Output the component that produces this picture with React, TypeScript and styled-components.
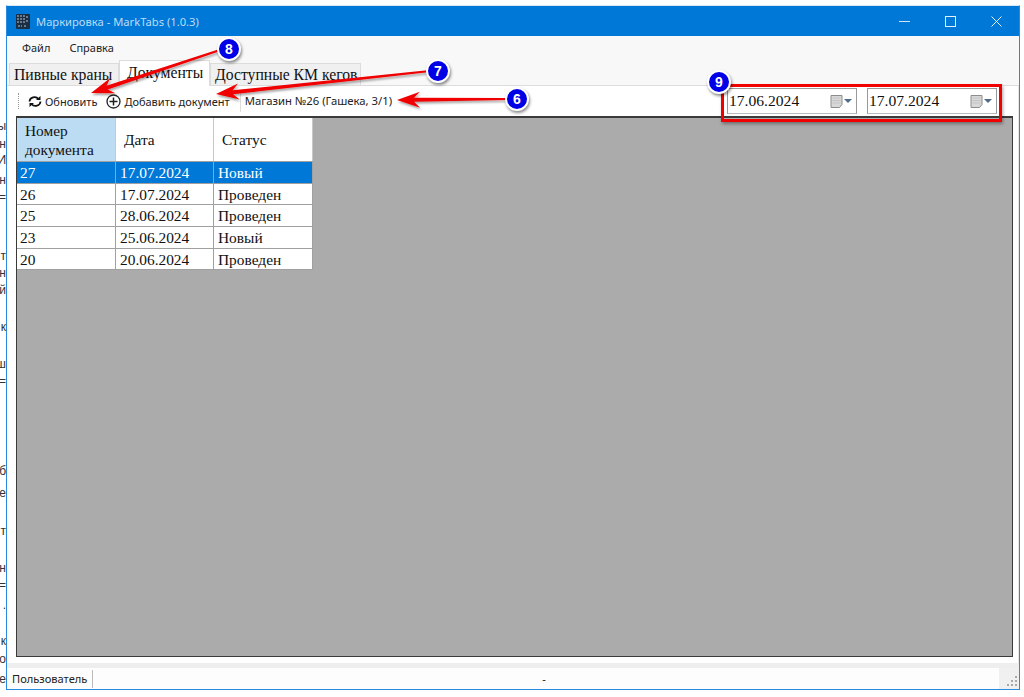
import React from "react";
import styled, { createGlobalStyle } from "styled-components";

const Global = createGlobalStyle`
  html, body { margin: 0; padding: 0; background: #fff; }
  #root { width: 1024px; height: 697px; overflow: hidden; }
`;

const Page = styled.div`
  position: relative;
  width: 1024px;
  height: 697px;
  padding: 5px 4px 7px 6px;
  box-sizing: border-box;
  background: #fff;
  display: flex;
  overflow: hidden;
`;

const Peek = styled.span<{ $top: number }>`
  position: absolute;
  right: 1018px;
  top: ${(p) => p.$top}px;
  font: 12px/14px "Liberation Sans", sans-serif;
  color: #333;
  white-space: nowrap;
`;

const Win = styled.div`
  position: relative;
  isolation: isolate;
  flex: 1;
  display: flex;
  flex-direction: column;
  border: 1px solid #2b8ae0;
  border-top-color: #d8e8f6;
  background: #fff;
  font-family: "Noto Sans", sans-serif;
`;

const TitleBar = styled.div`
  height: 30px;
  background: #0078d7;
  display: flex;
  align-items: center;
  padding-left: 8px;
  flex: none;
`;

const AppIcon = styled.svg`
  width: 16px;
  height: 17px;
  margin-right: 5px;
`;

const TitleText = styled.span`
  font: 11.2px "Noto Sans", sans-serif;
  color: #bcdcf6;
  flex: 1;
`;

const WinButton = styled.div`
  width: 46px;
  height: 30px;
  display: flex;
  align-items: center;
  justify-content: center;
`;

const MenuBar = styled.div`
  height: 23px;
  background: #f8f8f8;
  display: flex;
  align-items: center;
  padding-left: 15px;
  gap: 19px;
  flex: none;
`;

const MenuItem = styled.span`
  font: 11px "Noto Sans", sans-serif;
  color: #222;
`;

const TabStrip = styled.div`
  height: 26px;
  background: #f8f8f8;
  display: flex;
  align-items: flex-end;
  padding-left: 2px;
  flex: none;
`;

const Tab = styled.div<{ $active?: boolean; $w: number }>`
  height: ${(p) => (p.$active ? 26 : 22)}px;
  width: ${(p) => p.$w}px;
  box-sizing: border-box;
  background: ${(p) => (p.$active ? "#fff" : "#f0f0f0")};
  border: 1px solid #dcdcdc;
  border-bottom: none;
  margin-bottom: ${(p) => (p.$active ? -1 : 0)}px;
  z-index: ${(p) => (p.$active ? 1 : 0)};
  padding-left: ${(p) => (p.$active ? 7 : 4)}px;
  font: 15.7px/${(p) => (p.$active ? 24 : 21)}px "Liberation Serif", serif;
  color: #111;
  white-space: nowrap;
  overflow: hidden;
`;

const Panel = styled.div`
  flex: 1;
  min-height: 0;
  display: flex;
  flex-direction: column;
  background: #fff;
  border-top: 1px solid #dcdcdc;
  border-right: 1px solid #e6e6e6;
  padding: 0 5px 6px 9px;
`;

const Toolbar = styled.div`
  height: 30px;
  display: flex;
  align-items: center;
  flex: none;
  position: relative;
`;

const Grip = styled.div`
  width: 1px;
  height: 16px;
  margin: 0 8px 0 2px;
  border-left: 1px dotted #999;
`;

const ToolButton = styled.div`
  display: flex;
  align-items: center;
  gap: 3px;
  font: 11px "Noto Sans", sans-serif;
  color: #222;
  margin-right: 9px;
  white-space: nowrap;
`;

const ToolLabel = styled.div`
  border-left: 1px solid #ddd;
  height: 22px;
  margin-left: 1px;
  padding-left: 4px;
  font: 11.3px/22px "Noto Sans", sans-serif;
  color: #222;
  white-space: nowrap;
`;

const Spacer = styled.div`
  flex: 1;
`;

const DateBox = styled.div<{ $last?: boolean }>`
  width: 130px;
  height: 26px;
  box-sizing: border-box;
  border: 1px solid #999;
  border-bottom-color: #bbb;
  background: #fff;
  display: flex;
  align-items: center;
  padding: 0 3px 0 1px;
  margin-left: ${(p) => (p.$last ? 10 : 0)}px;
  margin-right: ${(p) => (p.$last ? 16 : 0)}px;
  font: 15.6px "Liberation Serif", serif;
  color: #111;
`;

const DateText = styled.span`
  flex: 1;
`;

const GridArea = styled.div`
  flex: 1;
  min-height: 0;
  background: #ababab;
  border: 1px solid #3a3a3a;
  border-top-width: 2px;
`;

const Table = styled.div`
  display: grid;
  grid-template-columns: 99px 98px 99px;
  grid-template-rows: 44px repeat(5, 21.7px);
  width: 296px;
  background: #a0a0a0;
`;

const HeadRow = styled.div`
  grid-column: 1 / 4;
  display: grid;
  grid-template-columns: 99px 98px 99px;
`;

const HeadCell = styled.div<{ $sel?: boolean }>`
  height: 43px;
  background: ${(p) => (p.$sel ? "#bcdcf4" : "#fff")};
  border-right: 1px solid #c8c8c8;
  box-sizing: border-box;
  display: flex;
  align-items: center;
  padding-left: 8px;
  font: 15.4px/19px "Liberation Serif", serif;
  color: #111;
`;

const Cell = styled.div<{ $sel?: boolean }>`
  box-sizing: border-box;
  height: calc(100% - 1px);
  margin-right: 1px;
  padding-left: 4px;
  background: ${(p) => (p.$sel ? "#0078d7" : "#fff")};
  color: ${(p) => (p.$sel ? "#fff" : "#111")};
  font: 15.4px/22px "Liberation Serif", serif;
  white-space: nowrap;
  overflow: hidden;
  &:nth-child(3n + 2) { padding-left: 3px; }
`;

const BandGap = styled.div`
  height: 5px;
  background: #eee;
  flex: none;
`;

const StatusBar = styled.div`
  height: 21px;
  background: #fdfdfd;
  display: flex;
  align-items: center;
  flex: none;
  position: relative;
  font: 11.1px "Noto Sans", sans-serif;
  color: #222;
`;

const StatusUser = styled.div`
  width: 86px;
  height: 18px;
  line-height: 18px;
  padding-left: 5px;
  box-sizing: border-box;
  border-right: 1px solid #bbb;
  white-space: nowrap;
`;

const StatusMid = styled.div`
  flex: 1;
  text-align: center;
  padding-right: 4px;
`;

const StatusGrip = styled.svg`
  width: 20px;
  height: 21px;
  background: #f0f0f0;
  flex: none;
`;

const Overlay = styled.svg`
  position: absolute;
  left: 0;
  top: 0;
  width: 1024px;
  height: 697px;
  pointer-events: none;
`;

const Badge = styled.div<{ $x: number; $y: number }>`
  position: absolute;
  left: ${(p) => p.$x - 12}px;
  top: ${(p) => p.$y - 12}px;
  width: 24px;
  height: 24px;
  box-sizing: border-box;
  border-radius: 50%;
  border: 2px solid #fff;
  background: #0000e6;
  box-shadow: 1px 2px 3px rgba(0, 0, 0, 0.45);
  color: #fff;
  font: bold 14px/20px "Liberation Sans", sans-serif;
  text-align: center;
`;

const RedFrame = styled.div`
  position: absolute;
  left: 721px;
  top: 84px;
  width: 281px;
  height: 38px;
  box-sizing: border-box;
  border: 3px solid #f00000;
  box-shadow: 1px 2px 3px rgba(0, 0, 0, 0.35);
`;

const rows = [
  ["27", "17.07.2024", "Новый"],
  ["26", "17.07.2024", "Проведен"],
  ["25", "28.06.2024", "Проведен"],
  ["23", "25.06.2024", "Новый"],
  ["20", "20.06.2024", "Проведен"],
];

const peeks: [number, string][] = [
  [119, "ы"], [137, "н"], [153, "И"], [173, "н"], [190, "="], [249, "т"], [266, "н"], [283, "й"],
  [320, "к"], [357, "ш"], [374, "="], [464, "б"], [486, "е"], [524, "т"], [561, "н"], [578, "="],
  [598, "."], [634, "к"], [652, "о"], [672, "е"],
];

const CalIcon = () => (
  <svg width="23" height="13" viewBox="0 0 23 13">
    <path d="M1 .5h11v9l-2.500 3H1z" fill="#d8d8d8" stroke="#8c8c8c" />
    <path d="M2.500 3h8M2.500 5.500h8M2.500 8h8" stroke="#c4c4c4" />
    <path d="M14 4h8l-4 4z" fill="#4f6a8a" />
  </svg>
);

const arrow = (x1: number, y1: number, x2: number, y2: number) => {
  const dx = x2 - x1, dy = y2 - y1;
  const l = Math.hypot(dx, dy);
  const ux = dx / l, uy = dy / l, nx = -uy, ny = ux;
  const p = (a: number, b: number) => `${(x2 - ux * a + nx * b).toFixed(1)},${(y2 - uy * a + ny * b).toFixed(1)}`;
  return [p(0, 0), p(23, 8), p(17, 2), p(l, 1), p(l, -1), p(17, -2), p(23, -8)].join(" ");
};

export default function App() {
  return (
    <Page>
      <Global />
      {peeks.map(([t, c]) => (
        <Peek key={t} $top={t}>{c}</Peek>
      ))}
      <Win>
        <TitleBar>
          <AppIcon viewBox="0 0 16 17">
            <rect x="1" y="1" width="14" height="15" rx="1" fill="#1b2f44" />
            <path d="M3 2v8M6 2v8M9 2v8M3 13h4M9 13h2M11 4h3M11 8h3" stroke="#b9c6d2" strokeWidth="1" strokeDasharray="2 1" />
          </AppIcon>
          <TitleText>Маркировка - MarkTabs (1.0.3)</TitleText>
          <WinButton>
            <svg width="11" height="11"><path d="M0 5.500h11" stroke="#cfe5f8" /></svg>
          </WinButton>
          <WinButton>
            <svg width="11" height="11"><rect x=".5" y=".5" width="10" height="10" fill="none" stroke="#e4f0fb" /></svg>
          </WinButton>
          <WinButton>
            <svg width="11" height="11"><path d="M.5.5l10 10M10.500.5l-10 10" stroke="#e4f0fb" /></svg>
          </WinButton>
        </TitleBar>
        <MenuBar>
          <MenuItem>Файл</MenuItem>
          <MenuItem>Справка</MenuItem>
        </MenuBar>
        <TabStrip>
          <Tab $w={110}>Пивные краны</Tab>
          <Tab $active $w={91}>Документы</Tab>
          <Tab $w={151}>Доступные КМ кегов</Tab>
        </TabStrip>
        <Panel>
          <Toolbar>
            <Grip />
            <ToolButton>
              <svg width="14" height="13" viewBox="1 0 13 13">
                <path d="M2 6.500a5 4.500 0 0 1 9-2.500M13 6.500a5 4.500 0 0 1-9 2.500" fill="none" stroke="#111" strokeWidth="1.700" />
                <path d="M8.500 5h4.500V1zM6.500 8H2v4z" fill="#111" />
              </svg>
              Обновить
            </ToolButton>
            <ToolButton>
              <svg width="15" height="15" viewBox="0 0 15 15">
                <circle cx="7.500" cy="7.500" r="6.500" fill="none" stroke="#222" strokeWidth="1.300" />
                <path d="M7.500 3.500v8M3.500 7.500h8" stroke="#222" strokeWidth="1.500" />
              </svg>
              Добавить документ
            </ToolButton>
            <ToolLabel>Магазин №26 (Гашека, 3/1)</ToolLabel>
            <Spacer />
            <DateBox>
              <DateText>17.06.2024</DateText>
              <CalIcon />
            </DateBox>
            <DateBox $last>
              <DateText>17.07.2024</DateText>
              <CalIcon />
            </DateBox>
          </Toolbar>
          <GridArea>
            <Table>
              <HeadRow>
                <HeadCell $sel>Номер<br />документа</HeadCell>
                <HeadCell>Дата</HeadCell>
                <HeadCell>Статус</HeadCell>
              </HeadRow>
              {rows.map((r, i) =>
                r.map((c, j) => (
                  <Cell key={`${i}${j}`} $sel={i === 0}>{c}</Cell>
                ))
              )}
            </Table>
          </GridArea>
        </Panel>
        <BandGap />
        <StatusBar>
          <StatusUser>Пользователь</StatusUser>
          <StatusMid>-</StatusMid>
          <StatusGrip viewBox="0 0 20 21">
            <path d="M16 16h2v2h-2zM12 16h2v2h-2zM8 16h2v2H8zM16 12h2v2h-2zM12 12h2v2h-2zM16 8h2v2h-2z" fill="#a8a8a8" />
          </StatusGrip>
        </StatusBar>
      </Win>
      <RedFrame />
      <Overlay viewBox="0 0 1024 697">
        <defs>
          <filter id="s" x="-20%" y="-50%" width="140%" height="200%">
            <feDropShadow dx="1" dy="2" stdDeviation="1.200" floodColor="#000" floodOpacity=".35" />
          </filter>
        </defs>
        <polygon points={arrow(220, 50, 91, 93)} fill="#f00000" filter="url(#s)" />
        <polygon points={arrow(430, 71, 216, 94)} fill="#f00000" filter="url(#s)" />
        <polygon points={arrow(508, 99, 397, 100)} fill="#f00000" filter="url(#s)" />
      </Overlay>
      <Badge $x={229} $y={49}>8</Badge>
      <Badge $x={438} $y={71}>7</Badge>
      <Badge $x={517} $y={99}>6</Badge>
      <Badge $x={719} $y={82}>9</Badge>
    </Page>
  );
}
